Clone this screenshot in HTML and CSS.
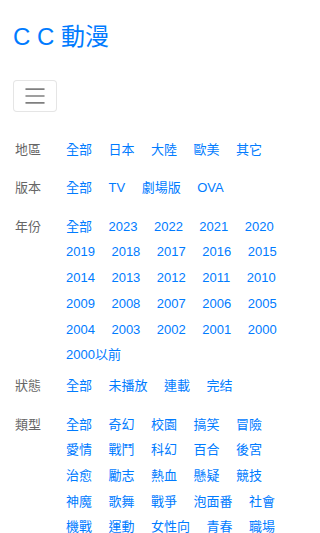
FILE: index.html
```html
<!DOCTYPE html>
<html lang="zh-Hant">
<head>
<meta charset="utf-8">
<meta name="viewport" content="width=device-width, initial-scale=1">
<title>C C 動漫</title>
<link rel="stylesheet" href="styles.css">
</head>
<body>
<div class="page">
  <header class="header">
    <h1 class="brand">C C 動漫</h1>
    <button class="toggler" type="button" aria-label="menu">
      <svg class="toggler-icon" viewBox="0 0 30 30" width="26" height="26"><path d="M4 7h22M4 15h22M4 23h22" stroke="rgba(0,0,0,0.5)" stroke-width="2" stroke-linecap="butt" fill="none"/></svg>
    </button>
  </header>

  <section class="filters">
    <div class="group">
      <div class="label">地區</div>
      <div class="items">
        <a class="item">全部</a><a class="item">日本</a><a class="item">大陸</a><a class="item">歐美</a><a class="item">其它</a>
      </div>
    </div>
    <div class="group">
      <div class="label">版本</div>
      <div class="items">
        <a class="item">全部</a><a class="item">TV</a><a class="item">劇場版</a><a class="item">OVA</a>
      </div>
    </div>
    <div class="group group-years">
      <div class="label">年份</div>
      <div class="items">
        <a class="item">全部</a><a class="item">2023</a><a class="item">2022</a><a class="item">2021</a><a class="item">2020</a>
        <a class="item">2019</a><a class="item">2018</a><a class="item">2017</a><a class="item">2016</a><a class="item">2015</a>
        <a class="item">2014</a><a class="item">2013</a><a class="item">2012</a><a class="item">2011</a><a class="item">2010</a>
        <a class="item">2009</a><a class="item">2008</a><a class="item">2007</a><a class="item">2006</a><a class="item">2005</a>
        <a class="item">2004</a><a class="item">2003</a><a class="item">2002</a><a class="item">2001</a><a class="item">2000</a>
        <a class="item">2000以前</a>
      </div>
    </div>
    <div class="group">
      <div class="label">狀態</div>
      <div class="items">
        <a class="item">全部</a><a class="item">未播放</a><a class="item">連載</a><a class="item">完结</a>
      </div>
    </div>
    <div class="group">
      <div class="label">類型</div>
      <div class="items">
        <a class="item">全部</a><a class="item">奇幻</a><a class="item">校園</a><a class="item">搞笑</a><a class="item">冒險</a>
        <a class="item">愛情</a><a class="item">戰鬥</a><a class="item">科幻</a><a class="item">百合</a><a class="item">後宮</a>
        <a class="item">治愈</a><a class="item">勵志</a><a class="item">熱血</a><a class="item">懸疑</a><a class="item">競技</a>
        <a class="item">神魔</a><a class="item">歌舞</a><a class="item">戰爭</a><a class="item">泡面番</a><a class="item">社會</a>
        <a class="item">機戰</a><a class="item">運動</a><a class="item">女性向</a><a class="item">青春</a><a class="item">職場</a>
      </div>
    </div>
  </section>
</div>
</body>
</html>
```
FILE: styles.css
```css
html, body {
  margin: 0;
  padding: 0;
  background: #fff;
}
body {
  font-family: "Liberation Sans", "Noto Sans CJK TC", sans-serif;
  color: #212529;
}
.page {
  width: 274px;
  padding: 23px 13px 0 13px;
}
.header {
  display: flex;
  flex-direction: column;
  align-items: flex-start;
}
.brand {
  margin: 0;
  font-size: 24px;
  line-height: 28.8px;
  font-weight: 400;
  color: #007bff;
}
.toggler {
  margin-top: 28px;
  width: 44px;
  height: 32px;
  padding: 0;
  border: 1px solid rgba(0, 0, 0, 0.1);
  border-radius: 4px;
  background: #fff;
  display: flex;
  align-items: center;
  justify-content: center;
}
.toggler-icon {
  display: block;
}
.filters {
  margin-top: 28px;
  padding-left: 2px;
}
.group {
  display: flex;
  align-items: flex-start;
  margin-bottom: 12.8px;
  font-size: 13px;
}
.group-years {
  margin-bottom: 5.3px;
}
.label {
  flex: 0 0 51px;
  color: #666;
  line-height: 20px;
  padding-bottom: 5.7px;
}
.items {
  flex: 1;
  display: flex;
  flex-wrap: wrap;
  column-gap: 16.5px;
}
.item {
  color: #007bff;
  text-decoration: none;
  line-height: 20px;
  margin-bottom: 5.7px;
  white-space: nowrap;
}
```
